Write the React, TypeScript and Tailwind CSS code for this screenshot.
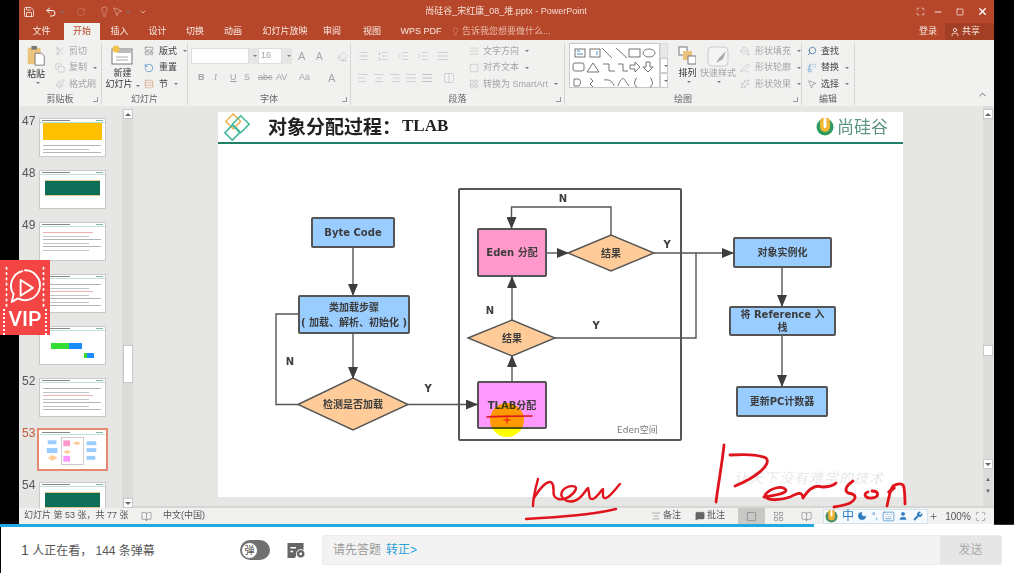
import React from 'react';
import {
  Save, Undo2, RotateCw, ChevronDown, Scissors, Copy, Paintbrush, LayoutTemplate, RotateCcw, Rows3,
  Lightbulb, User, Minus, X, Square, Search, Replace, MousePointer2, ChevronUp, Maximize,
  List, ListOrdered, IndentDecrease, IndentIncrease, AlignJustify, AlignLeft, AlignCenter, AlignRight,
  Columns2, Moon, Keyboard, Wrench, Eraser, MessageSquare, LayoutGrid, BookOpen, PaintBucket, PenLine, Sparkles, Plus,
} from 'lucide-react';

const TABS = [
  { label: '插入', cls: 'w-[39px]' },
  { label: '设计', cls: 'w-[37px]' },
  { label: '切换', cls: 'w-[38px]' },
  { label: '动画', cls: 'w-[38px]' },
  { label: '幻灯片放映', cls: 'w-[66px]' },
  { label: '审阅', cls: 'w-[28px]' },
  { label: '视图', cls: 'w-[52px]' },
  { label: 'WPS PDF', cls: 'w-[46px]' },
];

const Caret = () => <span className="ml-[3px] inline-block border-x-[2px] border-t-[2px] border-x-transparent border-t-[#777]" />;

const SmallItem = ({ icon, label, caret, faded }: { icon: React.ReactNode; label: string; caret?: boolean; faded?: boolean }) => (
  <div className={`flex h-[16.5px] items-center gap-[3px] whitespace-nowrap ${faded ? 'text-[#a5a5a5]' : 'text-[#444]'}`}>
    <span className="flex w-[13px] justify-center">{icon}</span>
    <span>{label}</span>
    {caret && <Caret />}
  </div>
);

const Group = ({ label, cls, launcher, children }: { label: string; cls: string; launcher?: boolean; children: React.ReactNode }) => (
  <div className={`relative flex h-[62px] flex-col border-r border-[#d6d6d4] ${cls}`}>
    <div className="flex h-[50px] min-h-0 flex-1">{children}</div>
    <div className="h-[12px] text-center text-[9px] leading-[12px] text-[#666]">{label}</div>
    {launcher && <span className="absolute right-[3px] bottom-[3px] h-[5px] w-[5px] border-r border-b border-[#999]" />}
  </div>
);

const ShapeGallery = () => (
  <svg viewBox="0 0 89 45" className="h-[45px] w-[89px]" fill="none" stroke="#666" strokeWidth="0.9">
    <rect x="5" y="5" width="10" height="8" />
    <path d="M7 7h3M7 10h6" stroke="#2f7fc4" />
    <rect x="20" y="5" width="10" height="8" />
    <path d="M27 7v4" stroke="#2f7fc4" />
    <path d="M32 4l10 10M46 4l11 10M72 4" />
    <rect x="59" y="5" width="11" height="8" />
    <ellipse cx="79" cy="9" rx="6" ry="4" />
    <rect x="3" y="19" width="11" height="8" rx="2" />
    <path d="M17 28l6-9 6 9zM33 20h6v7h6M48 20h5v7h5" />
    <path d="M60 21h5v-3l5 5-5 5v-3h-5zM76 18h4v5h3l-5 5-5-5h3z" />
    <path d="M4 42v-7h5a5 5 0 0 1 0 7zM20 34l3 3-3 3 3 3M34 36c6-1 9 2 10 6M48 42c3-9 6-9 8-4l3 4M67 34c-2 0-2 4-2 4l-1 1 1 1s0 3 2 3M80 34c2 0 2 4 2 4l1 1-1 1s0 3-2 3" />
  </svg>
);

const Ribbon = () => (
  <div className="flex h-[66px] bg-[#f1f1f0] pt-[3px] text-[9px]">
    <Group label="剪贴板" cls="w-[83px]" launcher>
      <div className="flex w-[34px] flex-col items-center pt-[2px]">
        <svg viewBox="0 0 20 24" className="h-[22px] w-[20px]">
          <rect x="1" y="3" width="14" height="18" rx="1" fill="#eac47a" />
          <rect x="5" y="1" width="6" height="4" fill="#777" />
          <path d="M9 9h7l3 3v10H9z" fill="#fff" stroke="#777" />
        </svg>
        <span className="mt-[1px] text-[#333]">粘贴</span>
        <Caret />
      </div>
      <div className="flex flex-col">
        <SmallItem icon={<Scissors size={10} strokeWidth={1} />} label="剪切" faded />
        <SmallItem icon={<Copy size={10} strokeWidth={1} />} label="复制" caret faded />
        <SmallItem icon={<Paintbrush size={10} strokeWidth={1} />} label="格式刷" faded />
      </div>
    </Group>
    <Group label="幻灯片" cls="w-[86px]">
      <div className="flex w-[41px] flex-col items-center pt-[2px] leading-[11px] text-[#333]">
        <svg viewBox="0 0 22 20" className="h-[20px] w-[22px]">
          <rect x="1" y="4" width="20" height="15" fill="#fff" stroke="#777" />
          <path d="M5 12h12M5 15h12" stroke="#aaa" />
          <rect x="6" y="5" width="14" height="3" fill="#bbb" />
          <circle cx="5" cy="4" r="3.5" fill="#f4c24a" />
        </svg>
        <span className="mt-[3px]">新建</span>
        <span className="whitespace-nowrap">幻灯片<Caret /></span>
      </div>
      <div className="flex flex-col">
        <SmallItem icon={<LayoutTemplate size={10} strokeWidth={1} />} label="版式" caret />
        <SmallItem icon={<RotateCcw size={10} strokeWidth={1.5} className="text-[#2f7fc4]" />} label="重置" />
        <SmallItem icon={<Rows3 size={10} strokeWidth={1} className="text-[#c9743f]" />} label="节" caret />
      </div>
    </Group>
    <Group label="字体" cls="w-[163px]" launcher>
      <div className="flex flex-col pl-[3px] pt-[5px] text-[#a5a5a5]">
        <div className="flex h-[16px] items-center">
          <div className="h-[16px] w-[58px] border border-[#ddd] bg-white" />
          <div className="flex h-[16px] w-[9px] items-center justify-center bg-[#e6e6e5]"><Caret /></div>
          <div className="flex h-[16px] w-[24px] items-center border border-[#ddd] bg-white pl-[2px]">16</div>
          <div className="flex h-[16px] w-[10px] items-center justify-center bg-[#e6e6e5]"><Caret /></div>
          <span className="ml-[6px] w-[18px] text-[11px]">A</span>
          <span className="w-[15px] text-[10px]">A</span>
          <Eraser size={11} strokeWidth={1} className="ml-[6px]" />
        </div>
        <div className="mt-[6px] flex h-[16px] items-center pl-[7px] text-[9px]">
          <b className="w-[16px]">B</b>
          <i className="w-[16px] font-serif">I</i>
          <u className="w-[14px]">U</u>
          <span className="w-[14px]">S</span>
          <span className="w-[18px] line-through">abc</span>
          <span className="w-[23px]">AV</span>
          <span className="w-[29px]">Aa</span>
          <span className="text-[11px]">A</span>
        </div>
      </div>
    </Group>
    <Group label="段落" cls="w-[214px]" launcher>
      <div className="flex w-[116px] flex-col gap-[6px] pl-[6px] pt-[7px] text-[#b0b0b0]">
        <div className="flex items-center gap-[8px]">
          <List size={12} strokeWidth={1} /><ListOrdered size={12} strokeWidth={1} /><IndentDecrease size={12} strokeWidth={1} /><IndentIncrease size={12} strokeWidth={1} /><AlignJustify size={12} strokeWidth={1} />
        </div>
        <div className="mt-[4px] flex items-center gap-[4px]">
          <AlignLeft size={12} strokeWidth={1} /><AlignCenter size={12} strokeWidth={1} /><AlignRight size={12} strokeWidth={1} /><AlignJustify size={12} strokeWidth={1} /><AlignJustify size={12} strokeWidth={1.5} /><Columns2 size={12} strokeWidth={1} className="ml-[6px]" />
        </div>
      </div>
      <div className="flex flex-col">
        <SmallItem icon={<AlignJustify size={10} strokeWidth={1} />} label="文字方向" caret faded />
        <SmallItem icon={<Square size={10} strokeWidth={1} />} label="对齐文本" caret faded />
        <SmallItem icon={<LayoutGrid size={10} strokeWidth={1} />} label="转换为 SmartArt" caret faded />
      </div>
    </Group>
    <Group label="绘图" cls="w-[237px]" launcher>
      <div className="ml-[4px] flex h-[45px] border border-[#c8c8c8] bg-white">
        <ShapeGallery />
      </div>
      <div className="flex h-[45px] w-[8px] flex-col text-[#888]">
        <span className="h-[15px] border border-[#ddd] bg-[#e8e8e7]" />
        <span className="flex h-[15px] items-center justify-center border border-[#ccc] bg-white"><Caret /></span>
        <span className="flex h-[15px] items-center justify-center border border-[#ccc] bg-white"><Caret /></span>
      </div>
      <div className="ml-[8px] flex w-[28px] flex-col items-center pt-[3px] text-[#333]">
        <svg viewBox="0 0 18 19" className="h-[19px] w-[18px]">
          <rect x="1" y="1" width="8" height="8" fill="#fff" stroke="#777" />
          <rect x="5" y="5" width="9" height="9" fill="#eac47a" />
          <rect x="10" y="10" width="8" height="8" fill="#fff" stroke="#777" />
        </svg>
        <span className="mt-[2px]">排列</span>
        <Caret />
      </div>
      <div className="ml-[1px] flex w-[40px] flex-col items-center pt-[3px] text-[#a5a5a5]">
        <svg viewBox="0 0 22 21" className="h-[21px] w-[22px]">
          <rect x="1" y="1" width="20" height="19" rx="4" fill="#f4f4f4" stroke="#ccc" />
          <path d="M9 17l3-5 7-7-3 8z" fill="#aaa" />
        </svg>
        <span className="whitespace-nowrap">快速样式</span>
        <Caret />
      </div>
      <div className="ml-[3px] flex flex-col">
        <SmallItem icon={<PaintBucket size={10} strokeWidth={1} />} label="形状填充" caret faded />
        <SmallItem icon={<PenLine size={10} strokeWidth={1} />} label="形状轮廓" caret faded />
        <SmallItem icon={<Sparkles size={10} strokeWidth={1} />} label="形状效果" caret faded />
      </div>
    </Group>
    <Group label="编辑" cls="w-[53px]">
      <div className="flex flex-col pl-[3px]">
        <SmallItem icon={<Search size={10} strokeWidth={1.6} className="-scale-x-100 text-[#2f5f9e]" />} label="查找" />
        <SmallItem icon={<Replace size={10} strokeWidth={1.2} className="text-[#2f7fc4]" />} label="替换" caret />
        <SmallItem icon={<MousePointer2 size={10} strokeWidth={1} />} label="选择" caret />
      </div>
    </Group>
    <div className="flex flex-1 items-end justify-end pb-[6px] pr-[6px]">
      <ChevronUp size={11} className="text-[#666]" />
    </div>
  </div>
);

const ThumbHead = () => (
  <div className="flex h-[4px] items-center justify-between border-b border-[#bfe0d4] px-[2px]">
    <span className="h-px w-[28px] bg-[#888]" />
    <span className="h-px w-[7px] bg-[#7fb89c]" />
  </div>
);

const Lines = ({ count, red }: { count: number; red?: number }) => (
  <div className="mt-[5px] flex flex-col gap-[2.5px] px-[3px]">
    {Array.from({ length: count }).map((_, i) => (
      <span key={i} className={`h-px ${i === red ? 'w-[50px] bg-[#eeb0b0]' : i % 2 ? 'w-[46px] bg-[#c4c4c4]' : 'w-[58px] bg-[#b4b4b4]'}`} />
    ))}
  </div>
);

const GreenBanner = () => (
  <div className="mx-[5px] mt-[5px] h-[16px] border-y border-[#d8c98a] bg-[#0f6e58]" />
);

const Thumb = ({ kind }: { kind: number }) => {
  if (kind === 47) {
    return (
      <>
        <ThumbHead />
        <div className="mx-[3px] h-[17px] bg-[#ffc000]" />
        <Lines count={3} />
      </>
    );
  }
  if (kind === 48 || kind === 54) return (<><ThumbHead /><GreenBanner /></>);
  if (kind === 51) {
    return (
      <>
        <ThumbHead />
        <div className="ml-[11px] mt-[12px] flex h-[6px] w-[31px]">
          <span className="w-[18px] bg-[#33dd33]" />
          <span className="flex-1 bg-[#1a8cff]" />
        </div>
        <div className="ml-[44px] mt-[4px] flex h-[5px] w-[10px]">
          <span className="w-[3px] bg-[#33dd33]" />
          <span className="flex-1 bg-[#1a8cff]" />
        </div>
      </>
    );
  }
  if (kind === 53) {
    return (
      <>
        <ThumbHead />
        <svg viewBox="0 0 67 33" className="h-[33px] w-[65px]">
          <rect x="8" y="5" width="9" height="4" fill="#9cf" />
          <rect x="7" y="13" width="11" height="5" fill="#9cf" />
          <path d="M8 23l5-3 5 3-5 3z" fill="#fc9" />
          <rect x="24" y="5" width="7" height="6" fill="#f9c" />
          <path d="M34 8l4-2 4 2-4 2z" fill="#fc9" />
          <path d="M24 17l4-2 4 2-4 2z" fill="#fc9" />
          <rect x="24" y="21" width="7" height="6" fill="#f9f" />
          <rect x="48" y="6" width="10" height="4" fill="#9cf" />
          <rect x="48" y="13" width="10" height="4" fill="#9cf" />
          <rect x="48" y="21" width="9" height="4" fill="#9cf" />
          <rect x="22" y="2" width="23" height="28" fill="none" stroke="#999" strokeWidth="0.5" />
        </svg>
      </>
    );
  }
  return (<><ThumbHead /><Lines count={kind === 49 ? 6 : 7} red={kind === 49 ? 0 : 2} /></>);
};

const SlideList = () => (
  <div className="w-[103px] overflow-hidden pl-[3px] pt-[12px]">
    {[47, 48, 49, 50, 51, 52, 53, 54].map(n => (
      <div key={n} className="flex h-[52px] items-start">
        {/* 50 and 51 sit under the VIP badge */}
        <span className={`-mt-[6px] w-[17px] text-[12px] ${n === 53 ? 'text-[#c5573a]' : 'text-[#555]'}`}>{n === 50 || n === 51 ? '' : n}</span>
        <div className={`h-[39px] w-[67px] overflow-hidden border bg-white ${n === 53 ? 'border-white ring-2 ring-[#e58a70]' : 'border-[#c9c9c7]'}`}>
          <Thumb kind={n} />
        </div>
      </div>
    ))}
  </div>
);

const ScrollButton = ({ up }: { up?: boolean }) => (
  <div className="flex h-[10px] w-[10px] items-center justify-center border border-[#c8c8c6] bg-white">
    <span className={`border-x-[3px] border-x-transparent ${up ? 'border-b-[3px] border-b-[#666]' : 'border-t-[3px] border-t-[#666]'}`} />
  </div>
);

const Diagram = () => (
  <svg viewBox="218 112 685 385" className="absolute inset-0 h-[385px] w-[685px]">
    <defs>
      <marker id="arrow" viewBox="0 0 12 10" refX="11" refY="5" markerWidth="12" markerHeight="10" markerUnits="userSpaceOnUse" orient="auto">
        <path d="M0 0L12 5L0 10z" fill="#3d3d3d" />
      </marker>
    </defs>
    <g fill="none" stroke="#555" strokeWidth="1.4">
      <path d="M353 248V295" markerEnd="url(#arrow)" />
      <path d="M353 334V378" markerEnd="url(#arrow)" />
      <path d="M298 404.5H276V314H298" />
      <path d="M407 404.5H477" markerEnd="url(#arrow)" />
      <path d="M512 381V356" markerEnd="url(#arrow)" />
      <path d="M512 320V277" markerEnd="url(#arrow)" />
      <path d="M547 253H568" markerEnd="url(#arrow)" />
      <path d="M611 235V207H511.5V228" markerEnd="url(#arrow)" />
      <path d="M654 253H733" markerEnd="url(#arrow)" />
      <path d="M555 338H696V253" />
      <path d="M782 268V306" markerEnd="url(#arrow)" />
      <path d="M782 336V386" markerEnd="url(#arrow)" />
    </g>
    <g fill="#ffcc99" stroke="#555" strokeWidth="1.4">
      <path d="M298 404.5L353 378L408 404.5L353 430z" />
      <path d="M568 253L611 235L654 253L611 271z" />
      <path d="M468 338L512 320L555 338L512 356z" />
    </g>
    <g fill="#3c3c3c" fontSize="10" fontWeight="700" textAnchor="middle" fontFamily="'DejaVu Sans','Noto Sans CJK SC',sans-serif">
      <text x="353" y="408">检测是否加载</text>
      <text x="611" y="257">结果</text>
      <text x="512" y="342">结果</text>
      <text x="563" y="202">N</text>
      <text x="667" y="248">Y</text>
      <text x="490" y="314">N</text>
      <text x="596" y="329">Y</text>
      <text x="290" y="365">N</text>
      <text x="428" y="392">Y</text>
    </g>
  </svg>
);

const BOX = 'absolute flex items-center justify-center rounded-[2px] border-2 border-[#555] text-center text-[10px] font-bold text-[#3c3c3c]';

const Slide = () => (
  <div className="relative h-[385px] w-[685px] overflow-hidden bg-white font-['DejaVu_Sans','Noto_Sans_CJK_SC',sans-serif]">
    {/* header */}
    <div className="box-content flex h-[30px] items-center border-b-2 border-[#1f8068]">
      <svg viewBox="0 0 32 32" className="ml-[4px] h-[30px] w-[30px]" fill="none" strokeWidth="1.6">
        <path d="M12 2l8 8-8 8-8-8z" stroke="#f0b75a" />
        <path d="M20 4l9 9-9 9-9-9z" stroke="#3fb89b" />
        <path d="M11 14l8 8-8 8-8-8z" stroke="#3fb89b" />
      </svg>
      <span className="-mt-[3px] ml-[16px] font-['Noto_Sans_CJK_SC'] text-[19px] font-bold leading-none text-[#222]">对象分配过程：</span>
      <span className="ml-[1px] -mt-[2px] font-['Liberation_Serif'] text-[17px] font-bold text-[#222]">TLAB</span>
      <div className="ml-auto mr-[15px] flex items-center gap-[3px]">
        <svg viewBox="0 0 18 18" className="h-[18px] w-[18px]">
          <circle cx="9" cy="9" r="8.5" fill="#2e9a62" />
          <rect x="4" y="-1" width="10" height="15" rx="5" fill="#f3b52e" />
          <rect x="7.5" y="0" width="3" height="10" rx="1.5" fill="#fff" />
        </svg>
        <span className="-mt-[3px] font-['Noto_Sans_CJK_SC'] text-[17px] leading-none text-[#5d9583]">尚硅谷</span>
      </div>
    </div>

    {/* diagram */}
    <div className="absolute left-[240px] top-[76px] h-[253px] w-[224px] rounded-[2px] border-2 border-[#555]" />
    <Diagram />
    <div className={`${BOX} left-[93px] top-[105px] h-[31px] w-[84px] bg-[#99ccff]`}>Byte Code</div>
    <div className={`${BOX} left-[80px] top-[183px] h-[39px] w-[112px] bg-[#99ccff] leading-[15px]`}>类加载步骤<br />( 加载、解析、初始化 )</div>
    <div className={`${BOX} left-[259px] top-[116px] h-[49px] w-[70px] bg-[#ff99cc]`}>Eden 分配</div>
    <div className={`${BOX} left-[259px] top-[269px] h-[48px] w-[70px] bg-[#ff99ff]`}>TLAB分配</div>
    <div className={`${BOX} left-[515px] top-[125px] h-[31px] w-[99px] bg-[#99ccff]`}>对象实例化</div>
    <div className={`${BOX} left-[511px] top-[194px] h-[30px] w-[107px] bg-[#99ccff] leading-[13px]`}>将 Reference 入<br />栈</div>
    <div className={`${BOX} left-[518px] top-[274px] h-[31px] w-[92px] bg-[#99ccff]`}>更新PC计数器</div>
    <span className="absolute left-[399px] top-[312px] text-[9px] text-[#777]">Eden空间</span>
    <span className="absolute left-[516px] top-[355px] font-['Noto_Sans_CJK_SC'] text-[14px] italic tracking-[1px] text-[#e8e8e8]">让天下没有难学的技术</span>
    {/* cursor highlight */}
    <div className="absolute left-[272px] top-[291px] h-[34px] w-[34px] rounded-full bg-[#ffff00] mix-blend-multiply" />
  </div>
);

const StatusBar = () => (
  <div className="flex h-[16px] items-center bg-[#f1f1f0] pl-[5px] text-[9px] text-[#555]">
    <span className="w-[117px] whitespace-nowrap">幻灯片 第 53 张，共 77 张</span>
    <BookOpen size={11} strokeWidth={1} />
    <span className="ml-[11px]">中文(中国)</span>
    <div className="ml-auto flex h-full items-center">
      <span className="flex w-[44px] items-center gap-[2px]"><AlignCenter size={10} strokeWidth={1} />备注</span>
      <span className="flex w-[43px] items-center gap-[2px]"><MessageSquare size={10} fill="#666" strokeWidth={1} />批注</span>
      <span className="flex h-full w-[27px] items-center justify-center bg-[#c8c8c6]"><Square size={11} strokeWidth={1} /></span>
      <span className="ml-[1px] flex w-[25px] justify-center"><LayoutGrid size={11} strokeWidth={1} /></span>
      <span className="flex w-[30px] justify-center"><BookOpen size={11} strokeWidth={1} /></span>
      <div className="ml-[2px] flex h-[15px] w-[105px] items-center border border-[#d5e3ec] bg-[#f7fafc] pl-[1px] text-[#2b7cc0]">
        <svg viewBox="0 0 14 14" className="h-[13px] w-[13px]">
          <circle cx="7" cy="7" r="6.5" fill="#4f8f6a" />
          <rect x="3.5" y="-1" width="7" height="12" rx="3.5" fill="#f3b52e" />
          <rect x="6" y="0" width="2" height="7" rx="1" fill="#fff" />
        </svg>
        <span className="ml-[4px] text-[12px] leading-none">中</span>
        <Moon size={10} fill="#2b7cc0" strokeWidth={1} className="ml-[3px]" />
        <span className="ml-[5px] text-[9px] leading-none">°,</span>
        <Keyboard size={13} strokeWidth={1.2} className="ml-[4px]" />
        <User size={10} fill="#2b7cc0" strokeWidth={1} className="ml-[3px]" />
        <Wrench size={10} fill="#2b7cc0" strokeWidth={1} className="ml-[5px]" />
      </div>
      <Plus size={9} className="w-[11px]" />
      <span className="ml-[5px] w-[28px] text-center text-[10px]">100%</span>
      <Maximize size={11} strokeWidth={1} className="ml-[3px] mr-[8px]" />
    </div>
  </div>
);

// pen strokes drawn over the slide
const Ink = () => (
  <svg viewBox="0 0 1014 573" className="pointer-events-none absolute left-0 top-0 h-[573px] w-[1014px] blur-[0.3px]" fill="none" stroke="#e0141c" strokeWidth="2.4" strokeLinecap="round" strokeLinejoin="round">
    <path d="M487 417C500 416 520 416 532 416" strokeWidth="1.6" />
    <path d="M507 417V423M504 420H510" strokeWidth="1" />
    <path d="M538 479C535 490 533 500 533 506" />
    <path d="M534 498C540 488 548 479 552 483C556 488 550 496 558 499C566 501 574 494 576 489C577 485 568 485 563 490C558 497 566 503 574 501C582 499 586 489 588 488C590 494 588 500 593 499C598 497 601 490 603 489C603 494 602 499 606 498C611 496 616 488 620 484" />
    <path d="M526 519C560 517 590 515 616 509" />
    <g strokeWidth="2.8">
      <path d="M724 445C722 465 718 485 716 502" />
      <path d="M730 455C745 454 758 454 766 458C772 464 757 477 735 486" />
      <path d="M764 497C775 495 786 494 786 490C782 485 770 488 765 495C766 502 782 500 790 497C796 494 802 490 803 498C808 490 814 484 822 487C825 487 832 487 836 483" />
      <path d="M853 481C846 486 844 490 848 493C856 494 858 498 850 503C846 505 840 506 834 507" />
      <path d="M868 492C862 494 866 499 872 498C880 497 879 491 872 491" />
      <path d="M887 506C889 496 891 488 893 486C900 482 904 484 904 488C905 494 905 500 905 504" />
      <path d="M889 492L894 488" strokeWidth="3.5" />
    </g>
  </svg>
);

const PowerPoint = () => (
  <div className="flex min-w-0 flex-1 flex-col blur-[0.3px]">
    {/* title bar */}
    <div className="flex h-[23px] items-center bg-[#b7472a] text-[#f3ddd5]">
      <Save size={12} strokeWidth={1.5} className="ml-[4px] text-white" />
      <Undo2 size={12} strokeWidth={2} className="ml-[10px] text-white" />
      <Caret />
      <RotateCw size={10} strokeWidth={1} className="ml-[12px] text-[#d98f78]" />
      <Lightbulb size={11} strokeWidth={1} className="ml-[13px]" />
      <MousePointer2 size={11} strokeWidth={1} className="ml-[2px]" />
      <Caret />
      <ChevronDown size={8} className="ml-[9px]" />
      <span className="ml-[244px] w-[230px] whitespace-nowrap text-center text-[9px]">尚硅谷_宋红康_08_堆.pptx - PowerPoint</span>
      <Maximize size={9} strokeWidth={1.5} className="ml-auto text-white" />
      <Minus size={10} strokeWidth={2} className="ml-[8px] text-white" />
      <Square size={8} strokeWidth={2} className="ml-[13px] text-white" />
      <X size={11} strokeWidth={3} className="ml-[13px] mr-[6px] text-white" />
    </div>
    {/* tabs */}
    <div className="flex h-[17px] items-center bg-[#b7472a] text-[9px] text-[#f8e8e2]">
      <span className="w-[45px] text-center">文件</span>
      <span className="flex h-full w-[36px] items-center justify-center bg-[#f1f1f0] text-[#b7472a]">开始</span>
      {TABS.map(t => (
        <span key={t.label} className={`${t.cls} shrink-0 whitespace-nowrap text-center`}>{t.label}</span>
      ))}
      <span className="ml-[7px] flex items-center gap-[2px] whitespace-nowrap text-[#e8b9a8]"><Lightbulb size={9} strokeWidth={1} />告诉我您想要做什么...</span>
      <span className="ml-auto mr-[8px]">登录</span>
      <span className="flex h-full w-[49px] items-center gap-[2px] bg-[#a33f25] pl-[5px]"><User size={10} />共享</span>
    </div>
    <Ribbon />
    {/* work area */}
    <div className="flex min-h-0 flex-1 bg-[#e6e6e4]">
      <SlideList />
      <div className="mt-[3px] flex w-[11px] flex-col items-center justify-between bg-[#dcdcda]">
        <ScrollButton up />
        <div className="-mb-[4px] mt-[226px] h-[38px] w-[10px] border border-[#c8c8c6] bg-white" />
        <div className="mt-auto"><ScrollButton /></div>
      </div>
      <div className="flex min-w-0 flex-1 flex-col">
        <div className="flex flex-1">
          <div className="ml-[85px] mt-[6px]"><Slide /></div>
          <div className="ml-auto mr-[1px] flex w-[10px] flex-col items-center bg-[#dcdcda] pt-[3px]">
            <ScrollButton up />
            <div className="mt-[226px] h-[11px] w-[10px] border border-[#c8c8c6] bg-white" />
            <div className="mt-[103px]"><ScrollButton /></div>
            <span className="mt-[4px] text-[6px] leading-[12px] text-[#666]">▲</span>
            <span className="text-[6px] leading-[12px] text-[#666]">▼</span>
          </div>
        </div>
        <div className="h-[2px] bg-[#d6d6d4]" />
      </div>
    </div>
    <StatusBar />
  </div>
);

const VipBadge = () => (
  <div className="absolute left-0 top-[260px] flex h-[75px] w-[50px] flex-col items-center justify-center bg-[#f44545] text-white blur-[0.3px]">
    <svg viewBox="0 0 50 50" className="h-[44px] w-[50px]" fill="none" stroke="#fff" strokeWidth="2.2" strokeLinecap="round" strokeLinejoin="round">
      <path d="M25 6a17 17 0 1 1-8 32l-7 4 2-9a17 17 0 0 1 10-26" />
      <path d="M20 17l14 9-14 9z" />
      <path d="M4 3v44M46 3v44" strokeWidth="2" strokeDasharray="1.5 4.5" />
    </svg>
    <span className="-mt-[1px] font-['Roboto'] text-[21px] font-medium leading-[22px]">VIP</span>
    <span className="absolute bottom-0 left-[3px] h-[26px] border-l-2 border-dotted border-white" />
    <span className="absolute bottom-0 right-[3px] h-[26px] border-l-2 border-dotted border-white" />
  </div>
);

const CommentBar = () => (
  <div className="flex h-[46px] items-center border-l border-black bg-white pl-[20px] text-[12px]">
    <span className="w-[219px] whitespace-nowrap text-[#555]"><b className="text-[14px] font-normal">1</b> 人正在看， 144 条弹幕</span>
    <div className="flex h-[20px] w-[30px] items-center rounded-full bg-[#707070] pl-[1px]">
      <span className="flex h-[17px] w-[17px] items-center justify-center rounded-full border border-[#707070] bg-white text-[10px] text-[#555]">弹</span>
    </div>
    <svg viewBox="0 0 20 18" className="ml-[16px] h-[17px] w-[20px]">
      <path d="M1 1h17v8h-6l-3 8H1z" fill="#666" />
      <path d="M4 6h6M4 10h3" stroke="#fff" strokeWidth="1.5" />
      <circle cx="15" cy="12.5" r="4.5" fill="#666" stroke="#fff" />
      <circle cx="15" cy="12.5" r="1.5" fill="#fff" />
    </svg>
    <div className="ml-[16px] flex h-[30px] w-[680px] items-center rounded-[2px] border border-[#ececec] bg-[#f3f3f3] pl-[10px]">
      <span className="text-[#999]">请先答题</span>
      <span className="ml-[5px] text-[#2a9fd8]">转正&gt;</span>
      <span className="ml-auto flex h-full w-[61px] items-center justify-center bg-[#e6e6e6] text-[#aaa]">发送</span>
    </div>
  </div>
);

export default function App() {
  return (
    <div className="relative h-[573px] w-[1014px] overflow-hidden bg-white font-['Liberation_Sans','Noto_Sans_CJK_SC',sans-serif]">
      <div className="flex h-[524px] bg-black">
        <div className="w-[19px]" />
        <PowerPoint />
        <div className="w-[20px]" />
      </div>
      {/* progress */}
      <div className="flex h-[3px]">
        <div className="w-[814px] bg-[#1fa9e0]" />
        <div className="flex-1 bg-white" />
        <div className="h-[1px] w-[20px] bg-[#333]" />
      </div>
      <CommentBar />
      <VipBadge />
      <Ink />
    </div>
  );
}
